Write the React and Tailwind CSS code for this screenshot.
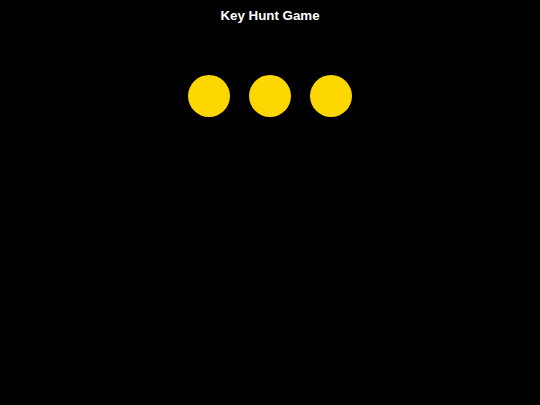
export default function App() {
  return (
    <div className="w-[540px] h-[405px] bg-black flex flex-col items-center" style={{ fontFamily: '"Liberation Sans", Arial, sans-serif' }}>
      <h1 className="text-white font-bold text-[13.33px] leading-[16px] mt-[8px]">Key Hunt Game</h1>
      <div className="flex gap-[19px] mt-[51px]">
        <div className="w-[42px] h-[42px] rounded-full bg-[#ffd700]"></div>
        <div className="w-[42px] h-[42px] rounded-full bg-[#ffd700]"></div>
        <div className="w-[42px] h-[42px] rounded-full bg-[#ffd700]"></div>
      </div>
    </div>
  );
}
